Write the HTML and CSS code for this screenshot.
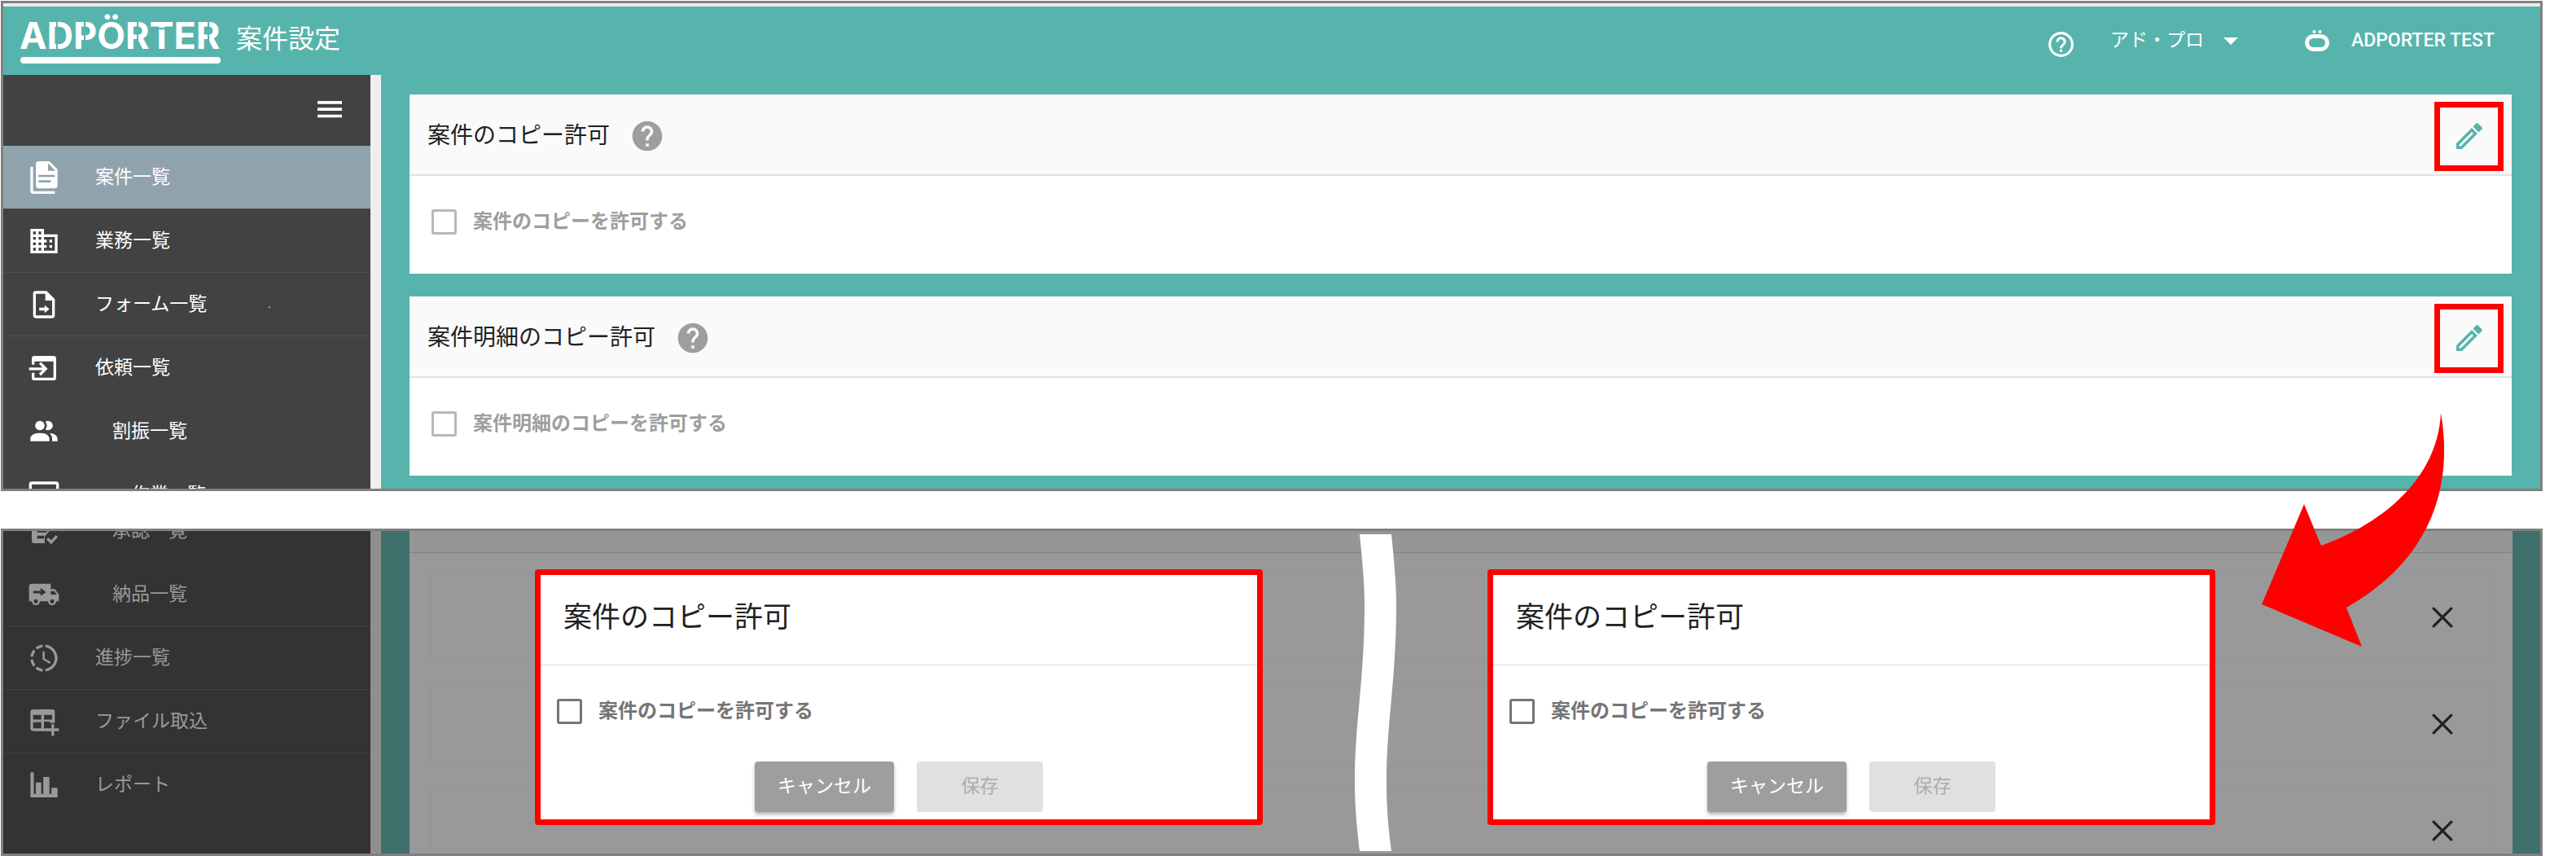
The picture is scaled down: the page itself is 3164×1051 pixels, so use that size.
FILE: index.html
```html
<!DOCTYPE html>
<html lang="ja">
<head>
<meta charset="utf-8">
<title>案件設定</title>
<link rel="stylesheet" href="styles.css">
</head>
<body>
<svg class="defs" aria-hidden="true">
  <symbol id="i-docs" viewBox="0 0 24 24"><path fill-rule="evenodd" d="M16 0H8C6.900 0 6 .9 6 2V18C6 19.100 6.900 20 8 20H20C21.100 20 22 19.100 22 18V6L16 0M15 7V1.500L20.500 7H15M4 4V22H20V24H4C2.900 24 2 23.100 2 22V4H4M8 10v1.600h12V10zM8 14v1.600h9V14z"/></symbol>
  <symbol id="i-domain" viewBox="0 0 24 24"><path d="M12 7V3H2v18h20V7H12zM6 19H4v-2h2v2zm0-4H4v-2h2v2zm0-4H4V9h2v2zm0-4H4V5h2v2zm4 12H8v-2h2v2zm0-4H8v-2h2v2zm0-4H8V9h2v2zm0-4H8V5h2v2zm10 12h-8v-2h2v-2h-2v-2h2v-2h-2V9h8v10zm-2-8h-2v2h2v-2zm0 4h-2v2h2v-2z"/></symbol>
  <symbol id="i-form" viewBox="0 0 24 24"><path fill-rule="evenodd" d="M6 2h8l6 6v12a2 2 0 0 1-2 2H6a2 2 0 0 1-2-2V4a2 2 0 0 1 2-2zM6 4v16h12V9h-5V4z"/><path d="M12.500 12.500l3.500 2.800-3.500 2.800v-1.800h-4v-2h4z"/></symbol>
  <symbol id="i-request" viewBox="0 0 24 24"><path d="M5 3h14a2 2 0 0 1 2 2v14a2 2 0 0 1-2 2H5a2 2 0 0 1-2-2v-3.500h2V19h14V7H5v2.500H3V5a2 2 0 0 1 2-2z"/><path d="M1 12.500h12M9 8.200l4.300 4.300L9 16.800" fill="none" stroke="currentColor" stroke-width="2"/></symbol>
  <symbol id="i-people" viewBox="0 0 24 24"><path d="M16 17V19H2V17S2 13 9 13 16 17 16 17M12.500 7.500A3.500 3.500 0 1 0 9 11A3.500 3.500 0 0 0 12.500 7.500M15.940 13A5.320 5.320 0 0 1 18 17V19H22V17S22 13.370 15.940 13M15 4A3.390 3.390 0 0 0 13.070 4.590A5 5 0 0 1 13.070 10.410A3.390 3.390 0 0 0 15 11A3.500 3.500 0 0 0 15 4Z"/></symbol>
  <symbol id="i-monitor" viewBox="0 0 24 24"><path fill-rule="evenodd" d="M3 2h18a2 2 0 0 1 2 2v12a2 2 0 0 1-2 2h-7v2h2v2H8v-2h2v-2H3a2 2 0 0 1-2-2V4a2 2 0 0 1 2-2zM3 4v12h18V4z"/></symbol>
  <symbol id="i-approve" viewBox="0 0 24 24"><path fill-rule="evenodd" d="M5 3h14a2 2 0 0 1 2 2v7h-5l-3.500 4v5H5a2 2 0 0 1-2-2V5a2 2 0 0 1 2-2zM7 7v2h10V7zM7 11v2h7v-2zM7 15.500v2h5v-2z"/><path d="M14.500 17.500l2.800 2.800 4.200-4.600" fill="none" stroke="currentColor" stroke-width="2"/></symbol>
  <symbol id="i-truck" viewBox="0 0 24 24"><path fill-rule="evenodd" d="M3 4h14v4h3l3 4v5h-2a3 3 0 0 1-6 0H9a3 3 0 0 1-6 0H1V6a2 2 0 0 1 2-2zM17 9.500V12h4.500l-2-2.500zM4 9.300v1.800h5.500V13l4-2.800-4-3.200v2.300zM6 15.500a1.500 1.500 0 1 0 0 3 1.500 1.500 0 0 0 0-3zM18 15.500a1.500 1.500 0 1 0 0 3 1.500 1.500 0 0 0 0-3z"/></symbol>
  <symbol id="i-progress" viewBox="0 0 24 24"><path d="M13,2.030V4.050C17.390,4.590 20.500,8.580 19.960,12.970C19.500,16.610 16.640,19.500 13,19.930V21.930C18.500,21.380 22.500,16.500 21.950,11C21.500,6.250 17.730,2.500 13,2.030M11,2.060C9.050,2.250 7.190,3 5.670,4.260L7.100,5.740C8.220,4.840 9.570,4.260 11,4.060V2.060M4.260,5.670C3,7.190 2.250,9.040 2.050,11H4.050C4.240,9.580 4.800,8.230 5.690,7.100L4.260,5.670M2.060,13C2.260,14.960 3.030,16.810 4.270,18.330L5.690,16.900C4.810,15.770 4.240,14.420 4.060,13H2.060M7.100,18.370L5.670,19.740C7.180,21 9.040,21.790 11,22V20C9.580,19.820 8.230,19.250 7.100,18.370M12.500,7V12.250L17,14.920L16.250,16.150L11,13V7H12.500Z"/></symbol>
  <symbol id="i-table" viewBox="0 0 24 24"><path fill-rule="evenodd" d="M4 3h14a2 2 0 0 1 2 2v8h-3.500v-1H12v5h2.500v2H4a2 2 0 0 1-2-2V5a2 2 0 0 1 2-2zM4 7v3.500h6V7zM12 7v3.500h6V7zM4 12.500V17h6v-4.500z"/><path d="M17.500 14h2v3h3.500v2h-3.500v3.500h-2V19H14v-2h3.500z"/></symbol>
  <symbol id="i-chart" viewBox="0 0 24 24"><path d="M2 2.500h2.500v16H6V10h4v8.500h1.500V6H16v12.500h1.500V14H22v7H2z"/></symbol>
  <symbol id="i-menu" viewBox="0 0 24 24"><path d="M3 6h18v2.200H3zM3 11h18v2.200H3zM3 16h18v2.200H3z"/></symbol>
  <symbol id="i-help" viewBox="0 0 24 24"><path d="M12 2C6.480 2 2 6.480 2 12s4.480 10 10 10 10-4.480 10-10S17.520 2 12 2zm1 17h-2v-2h2v2zm2.070-7.750l-.9.920C13.450 12.900 13 13.500 13 15h-2v-.5c0-1.100.450-2.100 1.170-2.830l1.240-1.260c.370-.360.590-.860.590-1.410 0-1.100-.9-2-2-2s-2 .9-2 2H8c0-2.210 1.790-4 4-4s4 1.790 4 4c0 .880-.360 1.680-.930 2.250z"/></symbol>
  <symbol id="i-help-outline" viewBox="0 0 24 24"><path d="M11 18h2v-2h-2v2zm1-16C6.480 2 2 6.480 2 12s4.480 10 10 10 10-4.480 10-10S17.520 2 12 2zm0 18c-4.410 0-8-3.590-8-8s3.590-8 8-8 8 3.590 8 8-3.590 8-8 8zm0-14c-2.210 0-4 1.790-4 4h2c0-1.100.9-2 2-2s2 .9 2 2c0 2-3 1.750-3 5h2c0-2.250 3-2.500 3-5 0-2.210-1.790-4-4-4z"/></symbol>
  <symbol id="i-pencil" viewBox="0 0 32 32"><path fill-rule="evenodd" d="M0 32v-7L19 6l7 7L7 32zM3.500 26.500V28.500H5.500L21 13 19 11zM20.500 4.500L24.200.8a2 2 0 0 1 2.800 0L31.200 5a2 2 0 0 1 0 2.800L27.500 11.500z"/></symbol>
  <symbol id="i-close" viewBox="0 0 24 24"><path d="M2 2L22 22M22 2L2 22" fill="none" stroke="currentColor" stroke-width="3" stroke-linecap="round"/></symbol>
</svg>

<section class="frame">
  <header class="topbar">
    <a class="brand" href="#" aria-label="ADPORTER">
      <svg class="logo" viewBox="0 0 248 72">
        <text class="wordmark" x="0" y="46">ADPÖRTER</text>
        <path class="stencil" d="M46 10V50M80 10V50M145 10V50M232 10V50M166 21H190"/>
        <rect x="1" y="56" width="246" height="8" rx="4"/>
      </svg>
    </a>
    <h1 class="page-title">案件設定</h1>
    <a class="help-link" href="#" aria-label="ヘルプ"><svg class="icon-help-outline"><use href="#i-help-outline"/></svg></a>
    <button class="user-menu" type="button">アド・プロ<svg class="caret" viewBox="0 0 18 9"><path d="M0 0h18L9 9z"/></svg></button>
    <a class="tenant" href="#">
      <svg class="tenant-mark" viewBox="0 0 30 26"><circle cx="11.500" cy="2" r="2"/><circle cx="18.500" cy="2" r="2"/><rect x="2.500" y="7.500" width="25" height="16" rx="8" fill="none" stroke="currentColor" stroke-width="5"/></svg>
      ADPORTER TEST
    </a>
  </header>
  <div class="body">
    <nav class="sidebar">
      <div class="sidebar-head"><button class="menu-button" type="button" aria-label="メニュー"><svg class="icon"><use href="#i-menu"/></svg></button></div>
      <a class="item active" href="#"><svg class="icon"><use href="#i-docs"/></svg><span>案件一覧</span></a>
      <a class="item" href="#"><svg class="icon"><use href="#i-domain"/></svg><span>業務一覧</span></a>
      <a class="item" href="#"><svg class="icon"><use href="#i-form"/></svg><span>フォーム一覧</span><span class="mark">.</span></a>
      <a class="item open" href="#"><svg class="icon"><use href="#i-request"/></svg><span>依頼一覧</span></a>
      <a class="item open sub" href="#"><svg class="icon"><use href="#i-people"/></svg><span>割振一覧</span></a>
      <a class="item open subsub" href="#"><svg class="icon"><use href="#i-monitor"/></svg><span>作業一覧</span></a>
    </nav>
    <main class="content">
      <section class="card">
        <div class="card-head">
          <h2>案件のコピー許可</h2>
          <svg class="icon-help"><use href="#i-help"/></svg>
          <button class="edit" type="button" aria-label="編集"><svg class="icon-pencil"><use href="#i-pencil"/></svg></button>
        </div>
        <label class="check"><input type="checkbox" disabled><span>案件のコピーを許可する</span></label>
      </section>
      <section class="card">
        <div class="card-head">
          <h2>案件明細のコピー許可</h2>
          <svg class="icon-help"><use href="#i-help"/></svg>
          <button class="edit" type="button" aria-label="編集"><svg class="icon-pencil"><use href="#i-pencil"/></svg></button>
        </div>
        <label class="check"><input type="checkbox" disabled><span>案件明細のコピーを許可する</span></label>
      </section>
    </main>
  </div>
</section>

<section class="frame dimmed">
  <div class="body">
    <nav class="sidebar">
      <a class="item open sub" href="#"><svg class="icon"><use href="#i-approve"/></svg><span>承認一覧</span></a>
      <a class="item sub" href="#"><svg class="icon"><use href="#i-truck"/></svg><span>納品一覧</span></a>
      <a class="item" href="#"><svg class="icon"><use href="#i-progress"/></svg><span>進捗一覧</span></a>
      <a class="item" href="#"><svg class="icon"><use href="#i-table"/></svg><span>ファイル取込</span></a>
      <a class="item open" href="#"><svg class="icon"><use href="#i-chart"/></svg><span>レポート</span></a>
    </nav>
    <div class="content">
      <div class="list-head"></div>
      <div class="list">
        <div class="row"><button class="close" type="button" aria-label="削除"><svg class="icon-close"><use href="#i-close"/></svg></button></div>
        <div class="row"><button class="close" type="button" aria-label="削除"><svg class="icon-close"><use href="#i-close"/></svg></button></div>
        <div class="row"><button class="close" type="button" aria-label="削除"><svg class="icon-close"><use href="#i-close"/></svg></button></div>
      </div>
    </div>
  </div>
  <div class="modal-layer">
    <div class="modal" role="dialog" aria-label="案件のコピー許可">
      <h2>案件のコピー許可</h2>
      <label class="check"><input type="checkbox"><span>案件のコピーを許可する</span></label>
      <div class="actions"><button class="cancel" type="button">キャンセル</button><button class="save" type="button" disabled>保存</button></div>
    </div>
    <div class="tear">
      <svg class="tear-line" viewBox="0 0 52 389"><path d="M7 0C10 30 13 60 13 85C13 180 1 230 1 305C1 335 4 365 7 389H46C42 360 40 335 40 305C40 230 52 180 52 85C52 60 49 30 46 0Z"/></svg>
    </div>
    <div class="modal" role="dialog" aria-label="案件のコピー許可">
      <h2>案件のコピー許可</h2>
      <label class="check"><input type="checkbox"><span>案件のコピーを許可する</span></label>
      <div class="actions"><button class="cancel" type="button">キャンセル</button><button class="save" type="button" disabled>保存</button></div>
    </div>
  </div>
</section>

<svg class="arrow" viewBox="0 0 224 288" aria-hidden="true"><path d="M0 235L52 112L73 163C150 135 216 80 220 0C234 80 216 176 104 239L123 287Z"/></svg>
</body>
</html>
```

FILE: styles.css
```css
* { box-sizing: border-box; }

body {
  position: relative;
  margin: 0;
  padding: 1px 41px 1px 1px;
  background: #fff;
  color: #212121;
  font-family: Roboto, "Noto Sans CJK JP", sans-serif;
  font-size: 23px;
  line-height: 32px;
}

h1, h2 { margin: 0; font-weight: 400; }
a { color: inherit; text-decoration: none; }
button {
  padding: 0;
  border: 0;
  background: none;
  color: inherit;
  font: inherit;
}
svg { display: block; flex: none; fill: currentColor; }
.defs { position: absolute; width: 0; height: 0; }

.frame {
  overflow: hidden;
  border: 3px solid #808080;
  background: #57b4ac;
}
.frame + .frame { margin-top: 46px; }

/* Top bar */
.topbar {
  display: flex;
  align-items: center;
  height: 88px;
  padding: 0 56px 0 20px;
  border-top: 4px solid #ebebeb;
  color: #fff;
}
.logo { width: 248px; height: 72px; }
.wordmark { font-family: Inter, sans-serif; font-size: 45px; font-weight: 700; }
.stencil { fill: none; stroke: #57b4ac; stroke-width: 2; }
.page-title {
  margin-left: 18px;
  padding-bottom: 4px;
  font-size: 32px;
  line-height: 40px;
}
.help-link { margin: 8px 42px 0 auto; }
.icon-help-outline { width: 37px; height: 37px; }
.user-menu { display: flex; align-items: center; gap: 24px; }
.caret { width: 18px; height: 9px; }
.tenant {
  display: flex;
  align-items: center;
  gap: 27px;
  margin-left: 82px;
  font-weight: 500;
}
.tenant-mark { width: 30px; height: 26px; }

/* Layout below the bar */
.body {
  display: grid;
  grid-template-columns: 464px minmax(0, 1fr);
}

/* Side menu */
.sidebar {
  contain: size;
  overflow: hidden;
  border-right: 13px solid #efefef;
  background: #424242;
  color: #fff;
}
.sidebar-head {
  display: flex;
  align-items: center;
  justify-content: flex-end;
  height: 87px;
  padding: 0 30px 4px 0;
}
.icon { width: 40px; height: 40px; }
.item {
  display: flex;
  flex: none;
  align-items: center;
  gap: 43px;
  height: 78px;
  padding-left: 30px;
  border-bottom: 1px solid #505050;
}
.item.active { background: #90a2ac; }
.item.open { border-bottom-color: transparent; }
.item.sub { gap: 64px; }
.item.subsub { gap: 87px; }
.mark { margin-left: 32px; font-size: 12px; }

/* Settings cards */
.content {
  display: grid;
  gap: 28px;
  padding: 24px 35px 16px;
}
.card { background: #fff; }
.card-head {
  display: flex;
  align-items: center;
  height: 100px;
  padding: 4px 10px 0 22px;
  border-bottom: 2px solid #e2e2e2;
  background: #fafafa;
}
.card h2 { font-size: 28px; line-height: 40px; }
.icon-help { width: 44px; height: 44px; margin-left: 24px; color: #9e9e9e; }
.edit {
  display: flex;
  align-items: center;
  justify-content: center;
  width: 85px;
  height: 85px;
  margin-left: auto;
  border: 7px solid #f00;
  color: #57b4ac;
}
.icon-pencil { width: 32px; height: 32px; }

.check {
  display: flex;
  align-items: center;
  gap: 20px;
  font-size: 24px;
  font-weight: 700;
}
.check input {
  flex: none;
  width: 31px;
  height: 31px;
  margin: 0;
  border: 3px solid #757575;
  border-radius: 3px;
  appearance: none;
}
.card .check {
  height: 120px;
  padding: 0 27px 8px;
  color: #9e9e9e;
}
.card .check input { border-color: #b8b8b8; }

/* Dimmed screen behind the dialogs */
.dimmed {
  display: grid;
  background: #3f706c;
}
.dimmed > * { grid-area: 1 / 1; }
.dimmed .sidebar {
  display: flex;
  flex-direction: column;
  justify-content: flex-end;
  padding-bottom: 45px;
  border-right-color: #8f8f8f;
  background: #333;
  color: #999;
}
.dimmed .item { border-bottom-color: #404040; }
.dimmed .item.open { border-bottom-color: transparent; }
.dimmed .content {
  display: block;
  overflow: hidden;
  contain: size;
  padding: 0 35px;
}
.list-head {
  height: 27px;
  border-bottom: 1px solid #808080;
  background: #969696;
}
.list {
  display: grid;
  gap: 26px;
  padding: 26px;
  background: #999;
}
.row {
  display: flex;
  align-items: center;
  justify-content: flex-end;
  height: 105px;
  padding-right: 46px;
  border: 1px solid #939393;
}
.icon-close { width: 26px; height: 26px; color: #212121; }

/* Dialogs */
.modal-layer {
  display: flex;
  padding: 0 400px 0 653px;
}
.modal {
  flex: 1;
  margin: 47px 0 35px;
  border: 7px solid #f00;
  border-radius: 4px;
  background: #fff;
}
.modal h2 {
  padding: 28px 28px 32px;
  border-bottom: 1px solid #dadada;
  font-size: 35px;
  line-height: 50px;
}
.modal .check {
  padding: 40px 20px 0;
  color: #757575;
}
.actions {
  display: flex;
  gap: 28px;
  padding: 46px 263px 9px;
}
.actions button { height: 62px; border-radius: 4px; }
.cancel {
  width: 171px;
  background: #9e9e9e;
  box-shadow: 0 3px 4px rgb(0 0 0 / 30%);
  color: #fff;
}
.save { width: 155px; background: #e0e0e0; color: #adadad; }

.tear { width: 276px; padding: 4px 0 2px; color: #fff; }
.tear-line { width: 52px; height: 389px; margin: 0 auto; }

.arrow {
  position: absolute;
  top: 507px;
  right: 162px;
  width: 224px;
  height: 288px;
  color: #f00;
}
```
